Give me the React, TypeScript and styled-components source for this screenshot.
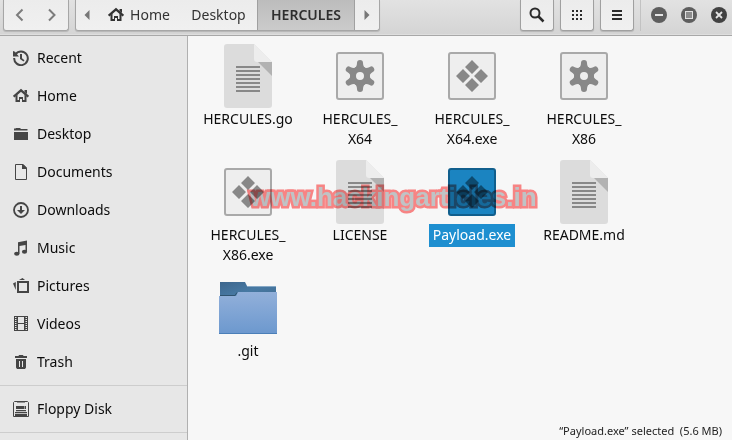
import React from "react";
import styled, { createGlobalStyle, css } from "styled-components";

const GlobalStyle = createGlobalStyle`
  * { box-sizing: border-box; }
  body {
    margin: 0;
    background: #f7f7f7;
    color: #0c0c0c;
    font: 14px/20px "Noto Sans", "Open Sans", sans-serif;
  }
  button { font: inherit; color: inherit; cursor: default; }
`;

const Window = styled.div`
  display: flex;
  flex-direction: column;
  height: 100vh;
  overflow: hidden;
`;

const HeaderBar = styled.header`
  display: flex;
  flex: none;
  align-items: flex-start;
  height: 36px;
  padding: 0 5px 0 3px;
  background: linear-gradient(#e2e2e2, #d4d4d4);
  border-bottom: 1px solid #a8a8a8;
  box-shadow: inset 0 -1px #dedede;
`;

const ButtonGroup = styled.div`
  display: flex;
  height: 31px;
  margin-right: 6px;
  overflow: hidden;
  color: #333;
  background: linear-gradient(#ececec, #f0f0f0);
  border: 1px solid #a6a6a6;
  border-top: 0;
  border-radius: 0 0 3px 3px;
  box-shadow: 0 1px 1px rgba(0, 0, 0, 0.15);
`;

const BarButton = styled.button<{ $width: number; $active?: boolean }>`
  display: flex;
  align-items: center;
  justify-content: center;
  gap: 6px;
  width: ${(p) => p.$width}px;
  height: 30px;
  padding: 0;
  border: 0;
  background: none;
  ${(p) =>
    p.$active &&
    css`
      font-weight: 600;
      color: #2e2e2e;
      background: linear-gradient(#bcbcbc, #cbcbcb);
      border: solid #a0a0a0;
      border-width: 0 1px;
    `}
`;

const ToolButton = styled(BarButton)`
  height: 31px;
  margin-right: 6px;
  color: #2b2b2b;
  background: linear-gradient(#ececec, #f0f0f0);
  border: 1px solid #a0a0a0;
  border-top: 0;
  border-radius: 0 0 3px 3px;
  box-shadow: 0 1px 1px rgba(0, 0, 0, 0.15);
`;

const WindowControls = styled.div`
  display: flex;
  height: 31px;
  padding-left: 10px;
  gap: 14px;
  border-left: 1px solid #c2c2c2;
`;

const ControlButton = styled.button`
  display: flex;
  align-items: center;
  width: 16px;
  height: 30px;
  padding: 0;
  border: 0;
  background: none;
`;

const Spacer = styled.div`
  flex: 1;
`;

const Body = styled.div`
  display: flex;
  flex: 1;
  min-height: 0;
`;

const Sidebar = styled.nav`
  flex: none;
  width: 188px;
  overflow: hidden;
  background: #e7e7e7;
  border-right: 1px solid #b0b0b0;
`;

const PlaceList = styled.ul`
  margin: 0;
  padding: 4px 0;
  list-style: none;
  border-bottom: 1px solid #cdcdcd;

  &:first-child { padding-top: 3px; }
`;

const Place = styled.a`
  display: flex;
  align-items: center;
  gap: 8px;
  height: 38px;
  padding-left: 13px;
  color: #0c0c0c;
  text-decoration: none;

  svg { color: #454545; }
`;

const Content = styled.main`
  position: relative;
  display: flex;
  flex: 1;
  flex-direction: column;
  min-width: 0;
`;

const FileGrid = styled.div`
  display: grid;
  grid-template-columns: repeat(auto-fill, 112px);
  row-gap: 9px;
  padding: 8px 4px;
`;

const FileItem = styled.button`
  display: flex;
  flex-direction: column;
  align-items: center;
  padding: 0;
  border: 0;
  background: none;
`;

const FileLabel = styled.span<{ $selected?: boolean }>`
  padding: 1px 4px 2px;
  ${(p) => p.$selected && "color: #fff; background: #1e8fd0;"}
`;

const StatusBar = styled.footer`
  margin-top: auto;
  padding: 0 10px;
  font-size: 11px;
  line-height: 18px;
  text-align: right;
  white-space: pre;
  color: #222;
`;

const Watermark = styled.div`
  position: absolute;
  left: 62px;
  top: 145px;
  font: bold 26px/32px "Liberation Sans", Arial, sans-serif;
  color: #c6cacc;
  mix-blend-mode: multiply;
  -webkit-text-stroke: 5px #ff8888;
  paint-order: stroke fill;
  pointer-events: none;
`;

const Glyph = ({ children }: { children: React.ReactNode }) => (
  <svg width="16" height="16" viewBox="0 0 16 16" fill="currentColor" aria-hidden="true">
    {children}
  </svg>
);

const HomeGlyph = () => (
  <Glyph>
    <path d="M.7 8.700 8 2.300l7.300 6.400" fill="none" stroke="currentColor" strokeWidth="2.200" />
    <path d="M11.500 2H14v4l-2.500-2zM2.500 8l2-1.500V12H6V9h4v3h1.500V6.500l2 1.500v6H9v-3H7v3H2.500z" />
  </Glyph>
);

const placeIcons: Record<string, React.ReactNode> = {
  Recent: (
    <Glyph>
      <path d="M2.600 4.200A6.800 6.800 0 1 1 1.200 8" fill="none" stroke="currentColor" strokeWidth="2" />
      <path d="M0 1v5.500h6L4.200 4.600 2 1.800zM7 4h2v4.200l2.500 2-1 1.300L7 9z" />
    </Glyph>
  ),
  Home: <HomeGlyph />,
  Desktop: (
    <Glyph>
      <path d="M1 4.500V2.500h1.500L3 2h4l1 1h6.500v1.500zM1 6h14v8H1z" />
    </Glyph>
  ),
  Documents: (
    <Glyph>
      <path d="M2.500.5H10L13.500 4v11.500h-11z" fill="none" stroke="currentColor" />
      <path d="M9 0h1l4 4v1H9z" />
    </Glyph>
  ),
  Downloads: (
    <Glyph>
      <circle cx="8" cy="8" r="7" fill="none" stroke="currentColor" strokeWidth="1.800" />
      <path d="M7 4h2v4h3l-4 4-4-4h3z" />
    </Glyph>
  ),
  Music: (
    <Glyph>
      <path d="M5 2.200 14 .5V11.500h-1.500V5L6.500 6v7.500H5z" />
      <ellipse cx="3.800" cy="13.700" rx="2.700" ry="2" />
      <ellipse cx="11.500" cy="11.800" rx="2.600" ry="2" />
    </Glyph>
  ),
  Pictures: (
    <Glyph>
      <path d="M4 3h12v12H4zm2 2v8h8V5zM0 5.500 2.800 4v8zM6 2l3.500-2L12 2z" fillRule="evenodd" />
    </Glyph>
  ),
  Videos: (
    <Glyph>
      <path d="M1 0h14v15H1zm4 1v6h6V1zm0 7v6h6V8zM2 1v1h1.500V1zm0 2v1h1.500V3zm0 2v1h1.500V5zm0 2v1h1.500V7zm0 2v1h1.500V9zm0 2v1h1.500v-1zm0 2v1h1.500v-1zM12.500 1v1H14V1zm0 2v1H14V3zm0 2v1H14V5zm0 2v1H14V7zm0 2v1H14V9zm0 2v1H14v-1zm0 2v1H14v-1z" fillRule="evenodd" />
    </Glyph>
  ),
  Trash: (
    <Glyph>
      <path d="M2 2h3.500L6 1h4l.5 1H14v2H2zm1 3h10v8.500L12 15H4l-1-1.500zm3 2v6h1V7zm3 0v6h1V7z" fillRule="evenodd" />
    </Glyph>
  ),
  "Floppy Disk": (
    <Glyph>
      <path d="M1.500.5h13l1 1v14H.5v-14z" fill="none" stroke="currentColor" />
      <path d="M4 0h8v1.500H4zM3 5h8.500v3H3zm9 0h1v3h-1zM3 9h10v1.200H3zM2 11h12v1.200H2zm0 2h12v3H2z" />
    </Glyph>
  ),
};

const TextFileIcon = () => (
  <svg width="64" height="64" viewBox="0 0 64 64" aria-hidden="true">
    <path d="M11 0h27l18 18v43q0 3-3 3H11q-3 0-3-3V3q0-3 3-3z" fill="#dcdcdc" />
    <path d="M38 0v15q0 3 3 3h15z" fill="#ededed" />
    <path d="m42 18 14 14V18z" fill="#b2b2b2" />
    <path d="M20 23h24M20 27h24M20 31h24M20 35h24M20 39h24M20 43h24M20 47h24" stroke="#888" strokeWidth="2" />
  </svg>
);

const Tile = ({ selected, children }: { selected?: boolean; children: React.ReactNode }) => (
  <svg width="64" height="64" viewBox="0 0 64 64" aria-hidden="true">
    <rect x="9" y="9" width="46" height="46" rx="2" fill={selected ? "#1b84c1" : "#eee"} stroke={selected ? "#115f8d" : "#a9a9a9"} strokeWidth="2" />
    <g fill={selected ? "#0d4b70" : "#888"}>{children}</g>
  </svg>
);

const Gear = () => (
  <g>
    <circle cx="32" cy="32" r="7" fill="none" stroke="#888" strokeWidth="6" />
    {[0, 60, 120, 180, 240, 300].map((angle) => (
      <path key={angle} d="M25 25.500q4-2 4-6.500 0-3 3-3t3 3q0 4.500 4 6.500l-4 1h-6z" transform={`rotate(${angle} 32 32)`} />
    ))}
  </g>
);

const Diamonds = () => (
  <path d="m32 16 7 7-7 7-7-7zM23 25l7 7-7 7-7-7zM41 25l7 7-7 7-7-7zM32 34l7 7-7 7-7-7z" />
);

const FolderIcon = () => (
  <svg width="64" height="64" viewBox="0 0 64 64" aria-hidden="true">
    <defs>
      <linearGradient id="folderFront" x2="0" y2="1">
        <stop stopColor="#92b0da" />
        <stop offset="1" stopColor="#6c98ce" />
      </linearGradient>
      <linearGradient id="folderBack" x2="1" y2="1">
        <stop stopColor="#3d668d" />
        <stop offset=".5" stopColor="#4779a3" />
        <stop offset="1" stopColor="#426d92" />
      </linearGradient>
    </defs>
    <path d="M4 6h25l2 4h29v14H4z" fill="url(#folderBack)" />
    <path d="M31 10.500h29" stroke="#86a8c6" />
    <path d="M4 19.500h15l2-3" stroke="#2f536f" fill="none" />
    <path d="M3 20h17l2-4h39v42H3z" fill="url(#folderFront)" />
    <path d="M3 57.500h58" stroke="#4b7fb8" />
  </svg>
);

type Kind = "text" | "binary" | "exe" | "folder";
type FileEntry = { lines: string[]; kind: Kind; selected?: boolean };

const files: FileEntry[] = [
  { lines: ["HERCULES.go"], kind: "text" },
  { lines: ["HERCULES_", "X64"], kind: "binary" },
  { lines: ["HERCULES_", "X64.exe"], kind: "exe" },
  { lines: ["HERCULES_", "X86"], kind: "binary" },
  { lines: ["HERCULES_", "X86.exe"], kind: "exe" },
  { lines: ["LICENSE"], kind: "text" },
  { lines: ["Payload.exe"], kind: "exe", selected: true },
  { lines: ["README.md"], kind: "text" },
  { lines: [".git"], kind: "folder" },
];

const FileIcon = ({ kind, selected }: { kind: Kind; selected?: boolean }) => {
  if (kind === "text") return <TextFileIcon />;
  if (kind === "folder") return <FolderIcon />;
  return <Tile selected={selected}>{kind === "exe" ? <Diamonds /> : <Gear />}</Tile>;
};

const Places = ({ names }: { names: string[] }) => (
  <PlaceList>
    {names.map((name) => (
      <li key={name}>
        <Place href="#">
          {placeIcons[name]}
          {name}
        </Place>
      </li>
    ))}
  </PlaceList>
);

export default function App() {
  return (
    <>
      <GlobalStyle />
      <Window>
        <HeaderBar>
          <ButtonGroup>
            <BarButton $width={32} aria-label="Back">
              <Glyph><path d="M10.500 2.500 5 8l5.500 5.500" fill="none" stroke="#7c7c7c" strokeWidth="2" /></Glyph>
            </BarButton>
            <BarButton $width={32} aria-label="Forward">
              <Glyph><path d="M5 2.500 10.500 8 5 13.500" fill="none" stroke="#7c7c7c" strokeWidth="2" /></Glyph>
            </BarButton>
          </ButtonGroup>
          <ButtonGroup>
            <BarButton $width={22} aria-label="Scroll path left">
              <Glyph><path d="M10.500 3v10l-5-5z" fill="#777" /></Glyph>
            </BarButton>
            <BarButton $width={82}><HomeGlyph />Home</BarButton>
            <BarButton $width={77}>Desktop</BarButton>
            <BarButton $width={98} $active>HERCULES</BarButton>
            <BarButton $width={24} aria-label="Scroll path right">
              <Glyph><path d="M5.500 3v10l5-5z" fill="#777" /></Glyph>
            </BarButton>
          </ButtonGroup>
          <Spacer />
          <ToolButton $width={34} aria-label="Search">
            <Glyph>
              <circle cx="6" cy="6" r="4.500" fill="none" stroke="currentColor" strokeWidth="2" />
              <path d="m9 9 5.500 5.500" stroke="currentColor" strokeWidth="2.500" />
            </Glyph>
          </ToolButton>
          <ToolButton $width={34} aria-label="Icon view">
            <Glyph>
              <path d="M3 4h10M3 8h10M3 12h10" fill="none" stroke="currentColor" strokeWidth="2" strokeDasharray="2" />
            </Glyph>
          </ToolButton>
          <ToolButton $width={34} aria-label="Menu">
            <Glyph><path d="M3 3h10v2H3zm0 4h10v2H3zm0 4h10v2H3z" /></Glyph>
          </ToolButton>
          <WindowControls>
            <ControlButton aria-label="Minimize">
              <Glyph><circle cx="8" cy="8" r="8" fill="#5e5e5e" /><path d="M4 7h8v2H4z" fill="#e4e4e4" /></Glyph>
            </ControlButton>
            <ControlButton aria-label="Maximize">
              <Glyph>
                <circle cx="8" cy="8" r="8" fill="#5e5e5e" />
                <rect x="4.500" y="4.500" width="7" height="7" fill="#8c8c8c" stroke="#e0e0e0" />
              </Glyph>
            </ControlButton>
            <ControlButton aria-label="Close">
              <Glyph><circle cx="8" cy="8" r="8" fill="#424242" /><path d="m5 5 6 6M11 5l-6 6" stroke="#e4e4e4" strokeWidth="1.800" /></Glyph>
            </ControlButton>
          </WindowControls>
        </HeaderBar>
        <Body>
          <Sidebar>
            <Places names={["Recent", "Home", "Desktop", "Documents", "Downloads", "Music", "Pictures", "Videos", "Trash"]} />
            <Places names={["Floppy Disk"]} />
          </Sidebar>
          <Content>
            <FileGrid>
              {files.map((file) => (
                <FileItem key={file.lines.join("")}>
                  <FileIcon kind={file.kind} selected={file.selected} />
                  <FileLabel $selected={file.selected}>
                    {file.lines.map((line, i) => (
                      <React.Fragment key={line}>
                        {i > 0 && <br />}
                        {line}
                      </React.Fragment>
                    ))}
                  </FileLabel>
                </FileItem>
              ))}
            </FileGrid>
            <Watermark>www.hackingarticles.in</Watermark>
            <StatusBar>{"“Payload.exe” selected  (5.6 MB)"}</StatusBar>
          </Content>
        </Body>
      </Window>
    </>
  );
}
